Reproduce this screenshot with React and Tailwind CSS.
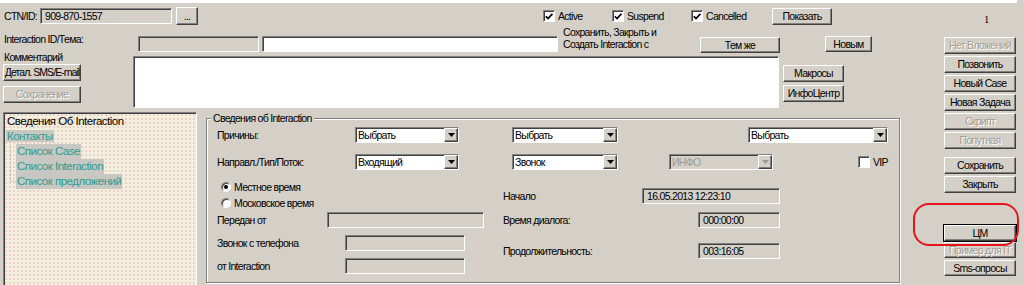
import React from "react";

const raised =
  "bg-[#d4d0c8] border border-t-white border-l-white border-r-[#404040] border-b-[#404040] shadow-[inset_-1px_-1px_0_#808080]";
const sunken =
  "border border-t-[#808080] border-l-[#808080] border-r-white border-b-white shadow-[inset_1px_1px_0_#404040]";
const dis = "text-[#a09e98] [text-shadow:1px_1px_0_#ffffff]";

function Btn({ className = "", disabled, children }) {
  return (
    <div
      className={`${raised} flex items-center justify-center shrink-0 whitespace-nowrap overflow-hidden leading-none ${
        disabled ? dis : "text-black"
      } ${className}`}
    >
      {children}
    </div>
  );
}

function Field({ className = "", value, gray }) {
  return (
    <div
      className={`${sunken} ${
        gray ? "bg-[#d4d0c8]" : "bg-white"
      } shrink-0 flex items-center pl-[4px] leading-none overflow-hidden whitespace-nowrap ${className}`}
    >
      {value}
    </div>
  );
}

function Select({ className = "", value, disabled }) {
  return (
    <div
      className={`${sunken} ${
        disabled ? "bg-[#d4d0c8]" : "bg-white"
      } shrink-0 flex items-center h-[16px] ${className}`}
    >
      <span
        className={`flex-1 pl-[2px] leading-none whitespace-nowrap ${
          disabled ? "text-[#9c9a94]" : "text-black"
        }`}
      >
        {value}
      </span>
      <div className={`${raised} w-[14px] h-full flex items-center justify-center shrink-0`}>
        <svg width="7" height="4" viewBox="0 0 7 4">
          <path d="M0 0h7L3.5 4z" fill={disabled ? "#9c9a94" : "#000"} />
        </svg>
      </div>
    </div>
  );
}

function Check({ checked }) {
  return (
    <div className={`${sunken} bg-white w-[12px] h-[12px] shrink-0 flex items-center justify-center`}>
      {checked && (
        <svg width="8" height="7" viewBox="0 0 8 7">
          <path d="M0.8 3.2 L3 5.6 L7.4 0.8" stroke="#000" strokeWidth="1.7" fill="none" />
        </svg>
      )}
    </div>
  );
}

function Radio({ checked }) {
  return (
    <div className="w-[10px] h-[10px] rounded-full bg-white border border-t-[#808080] border-l-[#808080] border-r-white border-b-white shadow-[inset_1px_1px_0_#404040] flex items-center justify-center shrink-0">
      {checked && <div className="w-[4px] h-[4px] rounded-full bg-black" />}
    </div>
  );
}

function TreeItem({ children, last }) {
  return (
    <div className="flex h-[15px]">
      <div className="w-[10px] shrink-0 flex">
        <div
          className={`ml-[4px] w-[6px] border-l border-dotted border-[#c4b4b4] ${
            last ? "h-[8px] border-b" : "h-[15px]"
          }`}
        />
      </div>
      <span className="bg-[#c9c7c1] text-[#2a9d93] pl-[1px] pr-[1px] whitespace-nowrap">{children}</span>
    </div>
  );
}

export default function App() {
  return (
    <div className="relative w-[1024px] h-[285px] overflow-hidden bg-[#d4d0c8] text-[10.5px] tracking-[-0.7px] leading-[11px] text-black font-['Liberation_Sans',Arial,sans-serif]">
      <div className="h-[3px] bg-white w-[1017px]" />
      <div className="flex">
        {/* LEFT AREA */}
        <div className="w-[940px] shrink-0">
          {/* Row 1 */}
          <div className="flex items-center h-[18px] mt-[4px]">
            <div className="w-[40px] pl-[4px] shrink-0">CTN/ID:</div>
            <Field className="w-[132px] h-[16px]" gray value="909-870-1557" />
            <Btn className="ml-[4px] w-[22px] h-[18px]">...</Btn>
            <div className="ml-[345px] w-[69px] flex items-center gap-[3px] shrink-0">
              <Check checked />
              <span>Active</span>
            </div>
            <div className="w-[79px] flex items-center gap-[3px] shrink-0">
              <Check checked />
              <span>Suspend</span>
            </div>
            <div className="w-[81px] flex items-center gap-[3px] shrink-0">
              <Check checked />
              <span>Cancelled</span>
            </div>
            <Btn className="w-[60px] h-[17px]">Показать</Btn>
          </div>

          {/* Row 2 */}
          <div className="flex items-start h-[25px]">
            <div className="w-[138px] pl-[4px] mt-[9px] shrink-0 whitespace-nowrap">Interaction ID/Тема:</div>
            <Field className="w-[121px] h-[16px] mt-[11px]" gray />
            <Field className="ml-[3px] w-[296px] h-[16px] mt-[11px]" />
            <div className="ml-[5px] w-[137px] mt-[1px] leading-[12px] shrink-0 whitespace-nowrap">
              <div>Сохранить, Закрыть и</div>
              <div>Создать Interaction с</div>
            </div>
            <Btn className="mt-[12px] w-[80px] h-[16px]">Тем же</Btn>
            <Btn className="ml-[45px] mt-[11px] w-[47px] h-[16px]">Новым</Btn>
          </div>

          {/* Row 3 */}
          <div className="flex items-start h-[61px]">
            <div className="w-[133px] pl-[3px] flex flex-col shrink-0">
              <div className="mt-[2px] pl-[1px] whitespace-nowrap">Комментарий</div>
              <Btn className="mt-[1px] w-[78px] h-[17px] tracking-[-0.95px]">Детал. SMS/E-mail</Btn>
              <Btn className="mt-[5px] w-[78px] h-[17px]" disabled>
                Сохранение
              </Btn>
            </div>
            <Field className="w-[646px] h-[52px] mt-[6px]" />
            <div className="ml-[4px] flex flex-col shrink-0">
              <Btn className="mt-[15px] w-[61px] h-[17px]">Макросы</Btn>
              <Btn className="mt-[3px] w-[61px] h-[17px]">ИнфоЦентр</Btn>
            </div>
          </div>

          {/* Lower */}
          <div className="flex items-start">
            <div
              className={`ml-[3px] mt-[1px] w-[194px] h-[180px] shrink-0 ${sunken} bg-[#f2efdc] bg-[image:radial-gradient(circle,#ecd0cc_1px,transparent_1.5px)] bg-[length:4px_4px]`}
            >
              <div className="pl-[2px] pt-[1px] text-[11.5px] tracking-[-0.5px] leading-[15px]">
                <div className="h-[15px] whitespace-nowrap pl-[1px]">Сведения Об Interaction</div>
                <div className="h-[15px]">
                  <span className="bg-[#c9c7c1] text-[#2a9d93] pl-[1px] pr-[1px]">Контакты</span>
                </div>
                <TreeItem>Список Case</TreeItem>
                <TreeItem>Список Interaction</TreeItem>
                <TreeItem last>Список предложений</TreeItem>
              </div>
            </div>

            <fieldset className="ml-[9px] mt-[2px] w-[694px] h-[170px] shrink-0 border border-[#808080] shadow-[inset_1px_1px_0_#ffffff,1px_1px_0_#ffffff] p-0 m-0">
              <legend className="ml-[4px] px-[2px] leading-[11px] bg-[#d4d0c8] whitespace-nowrap">
                Сведения об Interaction
              </legend>
              <div className="pl-[10px]">
                <div className="flex items-center h-[16px] mt-[3px]">
                  <div className="w-[138px] shrink-0">Причины:</div>
                  <Select className="w-[104px]" value="Выбрать" />
                  <Select className="ml-[53px] w-[106px]" value="Выбрать" />
                  <Select className="ml-[130px] w-[140px]" value="Выбрать" />
                </div>
                <div className="flex items-center h-[16px] mt-[11px]">
                  <div className="w-[138px] shrink-0 whitespace-nowrap">Направл./Тип/Поток:</div>
                  <Select className="w-[104px]" value="Входящий" />
                  <Select className="ml-[53px] w-[106px]" value="Звонок" />
                  <Select className="ml-[51px] w-[104px]" value="ИНФО" disabled />
                  <div className="ml-[85px] flex items-center gap-[3px] shrink-0">
                    <Check />
                    <span>VIP</span>
                  </div>
                </div>
                <div className="flex items-start">
                  <div className="w-[286px] shrink-0 flex flex-col">
                    <div className="flex items-center h-[12px] mt-[11px] pl-[4px] gap-[3px]">
                      <Radio checked />
                      <span>Местное время</span>
                    </div>
                    <div className="flex items-center h-[12px] mt-[4px] pl-[4px] gap-[3px]">
                      <Radio />
                      <span>Московское время</span>
                    </div>
                    <div className="flex items-center h-[16px] mt-[3px]">
                      <div className="w-[110px] shrink-0">Передан от</div>
                      <Field className="w-[157px] h-[16px]" gray />
                    </div>
                    <div className="flex items-center h-[16px] mt-[7px]">
                      <div className="w-[128px] shrink-0 whitespace-nowrap">Звонок с телефона</div>
                      <Field className="w-[120px] h-[16px]" gray />
                    </div>
                    <div className="flex items-center h-[16px] mt-[7px]">
                      <div className="w-[128px] shrink-0 whitespace-nowrap">от Interaction</div>
                      <Field className="w-[120px] h-[16px]" gray />
                    </div>
                  </div>
                  <div className="flex flex-col shrink-0">
                    <div className="flex items-center h-[16px] mt-[18px]">
                      <div className="w-[139px] shrink-0">Начало</div>
                      <Field className="w-[138px] h-[16px]" gray value="16.05.2013 12:23:10" />
                    </div>
                    <div className="flex items-center h-[16px] mt-[8px]">
                      <div className="w-[195px] shrink-0 whitespace-nowrap">Время диалога:</div>
                      <Field className="w-[82px] h-[16px]" gray value="000:00:00" />
                    </div>
                    <div className="flex items-center h-[16px] mt-[15px]">
                      <div className="w-[195px] shrink-0 whitespace-nowrap">Продолжительность:</div>
                      <Field className="w-[82px] h-[16px]" gray value="003:16:05" />
                    </div>
                  </div>
                </div>
              </div>
            </fieldset>
          </div>
        </div>

        {/* RIGHT COLUMN */}
        <div className="w-[72px] ml-[4px] shrink-0 flex flex-col">
          <div className="mt-[11px] pl-[40px] leading-[11px] tracking-normal font-['Liberation_Serif',serif]">1</div>
          <Btn className="mt-[12px] w-[72px] h-[17px]" disabled>
            Нет Вложений
          </Btn>
          <Btn className="mt-[2px] w-[72px] h-[17px]">Позвонить</Btn>
          <Btn className="mt-[2px] w-[72px] h-[17px]">Новый Case</Btn>
          <Btn className="mt-[2px] w-[72px] h-[17px]">Новая Задача</Btn>
          <Btn className="mt-[2px] w-[72px] h-[17px]" disabled>
            Скрипт
          </Btn>
          <Btn className="mt-[2px] w-[72px] h-[17px]" disabled>
            Попутная
          </Btn>
          <Btn className="mt-[8px] w-[72px] h-[17px]">Сохранить</Btn>
          <Btn className="mt-[2px] w-[72px] h-[17px]">Закрыть</Btn>
          <Btn className="mt-[32px] w-[72px] h-[16px] ring-1 ring-black">ЦМ</Btn>
          <Btn className="mt-[1px] w-[72px] h-[16px]" disabled>
            Пример для IT
          </Btn>
          <Btn className="mt-[2px] w-[72px] h-[16px]">Sms-опросы</Btn>
        </div>
      </div>

      {/* annotation overlay */}
      <div className="absolute left-[913px] top-[203px] w-[106px] h-[43px] border-2 border-[#e8141c] rounded-[16px] pointer-events-none" />
    </div>
  );
}
